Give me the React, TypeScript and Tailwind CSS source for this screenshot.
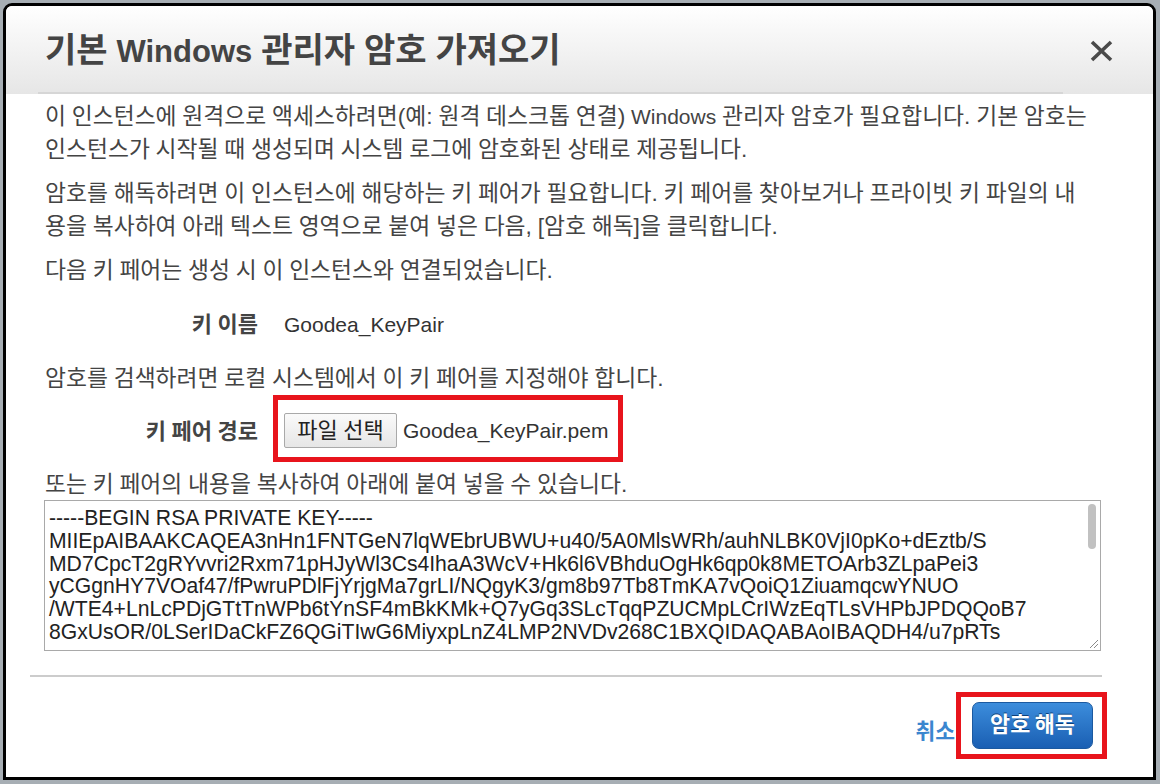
import React from "react";

const keyLines = [
  "-----BEGIN RSA PRIVATE KEY-----",
  "MIIEpAIBAAKCAQEA3nHn1FNTGeN7lqWEbrUBWU+u40/5A0MlsWRh/auhNLBK0VjI0pKo+dEztb/S",
  "MD7CpcT2gRYvvri2Rxm71pHJyWl3Cs4IhaA3WcV+Hk6l6VBhduOgHk6qp0k8METOArb3ZLpaPei3",
  "yCGgnHY7VOaf47/fPwruPDlFjYrjgMa7grLI/NQgyK3/gm8b97Tb8TmKA7vQoiQ1ZiuamqcwYNUO",
  "/WTE4+LnLcPDjGTtTnWPb6tYnSF4mBkKMk+Q7yGq3SLcTqqPZUCMpLCrIWzEqTLsVHPbJPDQQoB7",
  "8GxUsOR/0LSerIDaCkFZ6QGiTIwG6MiyxpLnZ4LMP2NVDv268C1BXQIDAQABAoIBAQDH4/u7pRTs",
];

// 한 줄씩 끊어서 원본과 같은 줄바꿈 유지
const Line: React.FC<{ children: React.ReactNode }> = ({ children }) => (
  <span className="block whitespace-nowrap">{children}</span>
);

const App: React.FC = () => {
  return (
    <div className="w-[1160px] h-[784px] bg-[#a7aeb4] overflow-hidden pt-[3px] pl-[3px] font-['Liberation_Sans','Noto_Sans_CJK_KR',sans-serif]">
      {/* 모달 */}
      <div className="w-[1153px] h-[777px] border-[3px] border-black rounded-t-[9px] bg-white overflow-hidden flex flex-col">
        {/* 헤더 */}
        <div className="bg-linear-to-b from-white to-[#e6e6e6]">
          <div className="h-[86px] flex items-center justify-between pl-[39px] pr-[40px]">
            <h1 className="mt-[3px] text-[34px] font-bold text-[#444] [word-spacing:-0.5px]">
              기본 <span className="text-[31px]">Windows</span> 관리자 암호 가져오기
            </h1>
            <svg width="23" height="22" viewBox="0 0 23 22" className="mt-[4px]">
              <path d="M2 2 L21 20 M21 2 L2 20" stroke="#4a4a4a" strokeWidth="3.6" strokeLinecap="butt" />
            </svg>
          </div>
          <div className="h-[2px] bg-[#d6d6d6] ml-[32px] mr-[90px]"></div>
        </div>

        {/* 본문 */}
        <div className="pl-[39px] pr-[52px] pt-[6px] flex flex-col text-[22.8px] leading-[33px] text-[#444] [word-spacing:-0.6px]">
          <p className="mb-[11px]">
            <Line>
              이 인스턴스에 원격으로 액세스하려면(예: 원격 데스크톱 연결) <span className="text-[21px]">Windows</span> 관리자 암호가 필요합니다. 기본 암호는
            </Line>
            <Line>인스턴스가 시작될 때 생성되며 시스템 로그에 암호화된 상태로 제공됩니다.</Line>
          </p>
          <p className="mb-[11px]">
            <Line>암호를 해독하려면 이 인스턴스에 해당하는 키 페어가 필요합니다. 키 페어를 찾아보거나 프라이빗 키 파일의 내</Line>
            <Line>용을 복사하여 아래 텍스트 영역으로 붙여 넣은 다음, [암호 해독]을 클릭합니다.</Line>
          </p>
          <p>다음 키 페어는 생성 시 이 인스턴스와 연결되었습니다.</p>

          <div className="flex mt-[21px]">
            <div className="w-[213px] text-right font-bold text-[22px]">키 이름</div>
            <div className="ml-[26px] text-[#333] text-[21px]">Goodea_KeyPair</div>
          </div>

          <p className="mt-[21px]">암호를 검색하려면 로컬 시스템에서 이 키 페어를 지정해야 합니다.</p>

          <div className="flex items-center">
            <div className="w-[213px] text-right font-bold text-[22px] pt-[6px]">키 페어 경로</div>
            <div className="ml-[15px] border-[5px] border-[#e8141c] pl-[6px] pr-[10px] pt-[13px] pb-[9px] flex items-center">
              <div className="h-[35px] w-[113px] flex items-center justify-center border border-[#a9a9a9] rounded-[2px] bg-linear-to-b from-[#fafafa] to-[#e6e6e6] text-[#222] text-[22px]">
                파일 선택
              </div>
              <span className="ml-[6px] text-[#333] text-[21px] leading-[35px]">Goodea_KeyPair.pem</span>
            </div>
          </div>

          <p className="mt-[6px]">또는 키 페어의 내용을 복사하여 아래에 붙여 넣을 수 있습니다.</p>

          {/* 텍스트 영역 */}
          <div className="relative -ml-px -mt-px h-[151px] border border-[#a9a9a9] bg-white overflow-hidden pl-[4px] pt-[6px] text-[21.15px] leading-[22.8px] text-[#222] whitespace-pre [word-spacing:0]">
            {keyLines.join("\n")}
            <div className="absolute right-[4px] top-[3px] w-[8px] h-[45px] rounded-full bg-[#c1c1c1]"></div>
            <svg width="12" height="12" viewBox="0 0 12 12" className="absolute right-[1px] bottom-[1px]">
              <path d="M11 3 L3 11 M11 7 L7 11" stroke="#8a8a8a" strokeWidth="1" />
            </svg>
          </div>
        </div>

        <div className="h-[2px] bg-[#cccccc] mt-[24px] ml-[24px] mr-[51px]"></div>

        {/* 푸터 */}
        <div className="flex justify-end items-center mt-[15px] mr-[46px]">
          <span className="text-[21.5px] font-bold text-[#3b86cf] mt-[13px] mr-px">취소</span>
          <div className="border-[5px] border-[#e8141c] pl-[11px] pr-[9px] py-[5px]">
            <div className="w-[121px] h-[47px] rounded-[7px] border border-[#1b59a0] bg-linear-to-b from-[#3c8ddc] to-[#1a5fb3] flex items-center justify-center text-white font-bold text-[21.8px] [word-spacing:-1.5px] [text-shadow:0_-1px_0_#0d3f7a]">
              암호 해독
            </div>
          </div>
        </div>
      </div>
    </div>
  );
};

export default App;
